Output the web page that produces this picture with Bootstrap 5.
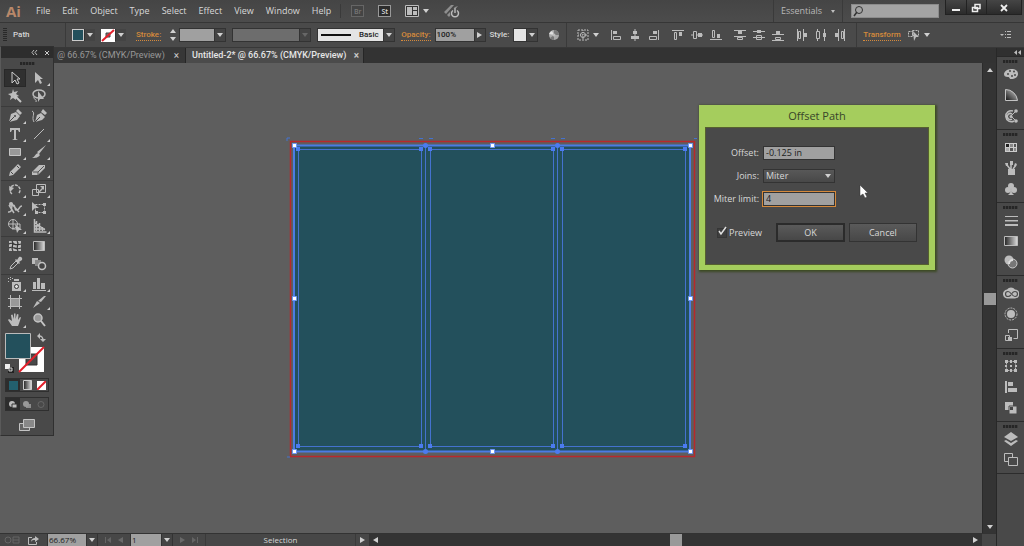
<!DOCTYPE html>
<html lang="en">
<head>
<meta charset="utf-8">
<meta name="viewport" content="width=device-width, initial-scale=1">
<title>Untitled-2 - Offset Path</title>
<link href="https://cdn.jsdelivr.net/npm/bootstrap@5.3.0/dist/css/bootstrap.min.css" rel="stylesheet">
<style>
:root{--bar:#4a4a4a;--dark:#323232;--line:#2e2e2e;--ink:#d8d8d8;--field:#a0a0a0;--accent:#d68a3c}
body{font-family:"Open Sans","Noto Sans",sans-serif;font-size:9px;line-height:12px;color:var(--ink);background:#5e5e5e}
svg{display:block;flex:none;fill:#bcbcbc;stroke:none}
svg .ln,.ln{fill:none;stroke:#bcbcbc}
.tiny{font-size:8px}
button,input,select{font:inherit;color:inherit;border:0;padding:0;margin:0;border-radius:0;min-width:0}
button{background:none}
.vr-dark{width:1px;align-self:stretch;background:#3a3a3a;flex:none}
.caret-d{border:3px solid transparent;border-top:4px solid #d0d0d0;border-bottom:0;width:0;height:0;flex:none}
.caret-s{border:2px solid transparent;border-top:3px solid #c0c0c0;border-bottom:0;width:0;height:0;flex:none}
.caret-u{border:3px solid transparent;border-bottom:4px solid #d0d0d0;border-top:0;width:0;height:0;flex:none}
.caret-r{border:3px solid transparent;border-left:5px solid #d0d0d0;border-right:0;width:0;height:0;flex:none}
.caret-l{border:3px solid transparent;border-right:5px solid #d0d0d0;border-left:0;width:0;height:0;flex:none}
.off{opacity:.25}
/* menu bar */
.menubar{height:23px;background:linear-gradient(#454545,#4c4c4c);border-bottom:1px solid #363636}
.logo{font-family:"Open Sans",sans-serif;font-size:15px;line-height:20px;font-weight:700;color:#b8886a;width:32px;padding-left:6px}
.menus{gap:12px}
.menus a,.optbar a{color:inherit;text-decoration:none}
.optbar a{color:var(--accent);border-bottom:1px dotted var(--accent);line-height:10px;white-space:nowrap}
.appbox{width:13px;height:12px;border:1px solid #999;background:#2c2c2c;font-size:7px;line-height:9px;text-align:center;font-weight:600}
.appbox.dim{border-color:#666;color:#777;background:#444}
.app-tools{gap:14px;margin-left:9px;padding-left:10px;border-left:1px solid #3a3a3a}
.work{width:68px;gap:9px;color:#b8b8b8}
.find{width:88px;height:14px;background:#a3a3a3;border:1px solid #8b8b8b}
.find input{background:none;color:#222;width:100%}
.winbtns{height:15px;margin:0 2px 0 6px;background:linear-gradient(#454545,#2b2b2b);border:1px solid #222;border-top:0}
.winbtns button{height:14px;border-left:1px solid #222}
.winbtns button:first-child{border:0}
.wb{width:20px}.wb-x{width:35px}
/* options bar */
.optbar{font-family:Roboto,"Open Sans",sans-serif;font-weight:500;height:25px;background:#4a4a4a;gap:6px;border-bottom:1px solid #383838;padding-left:3px}
.gripv{width:4px;height:14px;background:repeating-linear-gradient(#292929 0 1px,transparent 1px 2px)}
.kind{width:46px}
.step{width:12px;align-items:center}
.fld{height:14px;border:1px solid #333;background:var(--field);color:#1c1c1c;display:flex}
.fld input{background:none;width:100%;height:12px;padding:0 1px}
.dd{width:11px;height:12px;background:#444;border-left:1px solid #333;display:flex;align-items:center;justify-content:center;flex:none}
.swatch-s{width:12px;height:12px;border:1px solid #ccc;background:#23505c}
.wh{background:#e4e4e4}
.trio{gap:7px}
.aligns{gap:12px;padding:0 4px 0 5px}
/* tabs */
.tabstrip{height:15px;background:#333;padding-left:54px;font-family:Roboto,"Open Sans",sans-serif}
.tab{height:15px;border-right:1px solid #262626;color:#989898;background:#373737;line-height:15px;white-space:nowrap;padding:0 4px 0 3px}
.tab.current{background:#4b4b4b;color:#e6e6e6;font-weight:500;padding:0 2px 0 6px}
.tab button{width:9px;line-height:13px;color:#ccc;font-size:10px}
/* work area */
.board{background:#5e5e5e;min-width:0}
.vbar{width:14px;background:#343434;border-left:1px solid #2b2b2b;padding:5px 0 4px}
.thumb{width:12px;height:12px;background:#999;flex:none}
.status{height:13px;background:#474747;border-top:1px solid #333;overflow:hidden}
.status .fld{height:12px;border-width:0 1px}
.hbar{background:#343434;padding:0 4px}
/* dock */
.dock{width:28px;background:#494949;border-left:1px solid #282828}
.dock-head{height:9px;background:#303030;border-bottom:1px solid #292929;padding-right:3px}
.dockset{border-bottom:1px solid #2c2c2c;padding-bottom:5px;gap:5px}
.griph{height:9px;width:100%;display:flex;align-items:center;justify-content:center}
.griph::before{content:"";width:15px;height:3px;background:repeating-linear-gradient(90deg,#262626 0 2px,#3c3c3c 2px 3px)}
.dockset .griph{margin-bottom:-5px}
.dockset button,.toolset button{display:flex}
/* floating tool box */
.toolbox{left:0;top:46px;width:54px;background:#494949;border:1px solid #303030;border-left-color:#5a5a5a;z-index:5}
.tb-head{height:11px;background:#2d2d2d;gap:6px;padding-right:3px}
.toolbox .griph{height:11px}
.toolset{display:grid;grid-template-columns:22px 22px;justify-content:center;grid-auto-rows:18px;gap:0 2px}
.toolset+.toolset{border-top:1px solid #3b3b3b;margin-top:1px}
.toolset button{align-items:center;justify-content:center;position:relative}
.toolset .on{background:#303030;outline:1px solid #282828;outline-offset:-1px}
.more::after{content:"";position:absolute;right:0;bottom:1px;border-bottom:3px solid #ccc;border-left:3px solid transparent}
.modes{margin:5px 4px 0 4px;border:1px solid #2f2f2f;height:14px;width:44px}
.modes button{width:14px;height:12px;display:flex;align-items:center;justify-content:center}
.modes .on{background:#2d2d2d}
/* dialog */
.dlg{top:42px;right:47px;width:236px;background:#a5cd5d;padding:0 6px 5px;box-shadow:1px 1px 2px 1px #3c4a24;z-index:3}
.dlg h1{font-size:11px;line-height:22px;margin:0;text-align:center;font-weight:400;color:#39452a}
.dlg-body{background:#494949;border:1px solid #56602f;padding:18px 11px 21px;height:138px}
.rows{display:grid;grid-template-columns:42px 72px;grid-auto-rows:13px;gap:10px 4px;align-items:center}
.rows label{text-align:right;white-space:nowrap;justify-self:end}
.rows .fld{height:14px}
.rows .fld input,.rows select{height:12px;padding:0 2px;line-height:12px}
.rows .pick{background:linear-gradient(#585858,#484848);color:var(--ink);align-items:center;padding-right:3px}
.rows select{appearance:none;background:none;width:100%}
.rows .hot{outline:1px solid var(--accent)}
.rows input:focus{outline:0}
.acts{margin-top:18px;gap:4px}
.acts .chk{width:56px;gap:2px}
.chk input{appearance:none;width:10px;height:10px;background:#3e3e3e;border:1px solid #363636;margin:0}
.chk svg{position:absolute;left:0;top:-2px;pointer-events:none}
.acts button{width:69px;height:19px;background:linear-gradient(#5a5a5a,#474747);border:1px solid #333;line-height:17px}
.acts .def{border:2px solid #2b2b2b;line-height:15px}
.pointer{top:122px;right:113px;z-index:4}
</style>
</head>
<body class="vh-100 d-flex flex-column overflow-hidden">

<header class="menubar d-flex align-items-center flex-shrink-0">
  <div class="logo pe-1">Ai</div>
  <nav class="menus d-flex ps-1" aria-label="Main menu">
    <a href="#">File</a><a href="#">Edit</a><a href="#">Object</a><a href="#">Type</a><a href="#">Select</a><a href="#">Effect</a><a href="#">View</a><a href="#">Window</a><a href="#">Help</a>
  </nav>
  <div class="app-tools d-flex align-items-center">
    <button class="appbox dim" type="button">Br</button>
    <button class="appbox" type="button">St</button>
    <button type="button" class="d-flex align-items-center" aria-label="Arrange documents"><svg class="me-1" width="14" height="12"><path d="M0 0h14v12H0z" fill="#333"/><path d="M.5.5h13v11H.5z" class="ln"/><path d="M2 2h5v8H2zM8 2h4v3H8zM8 6h4v4H8z"/></svg><span class="caret-d"></span></button>
    <button type="button" aria-label="GPU performance"><svg width="18" height="14"><path d="M1 8 8 1h3L3 10zM4 11l8-8 3-1-9 11z" opacity=".6"/><circle cx="12" cy="9" r="5" fill="#4a4a4a"/><path class="ln" d="M10 6.500a3.500 3.500 0 1 0 4 0" stroke-width="1.500"/><path d="M11.300 4h1.400v5h-1.400z"/></svg></button>
  </div>
  <div class="ms-auto d-flex align-self-stretch align-items-center">
    <span class="vr-dark"></span>
    <button type="button" class="work d-flex align-items-center justify-content-center">Essentials <span class="caret-s"></span></button>
    <span class="vr-dark me-2"></span>
    <label class="find d-flex align-items-center"><svg width="14" height="12"><circle cx="7" cy="5" r="3.500" fill="none" stroke="#333"/><path d="m5 7-3 4" stroke="#333" stroke-width="1.500"/></svg><input type="text" aria-label="Search"></label>
    <div class="winbtns d-flex align-self-start">
      <button class="wb" type="button" aria-label="Minimize"><svg width="20" height="13"><path d="M6 8h8v2H6z" fill="#eee"/></svg></button>
      <button class="wb" type="button" aria-label="Restore"><svg width="19" height="13"><path d="M8 3.500h5v4H8zM5.500 6.500h5v4h-5z" fill="#333" stroke="#eee" stroke-width="1.500"/></svg></button>
      <button class="wb-x" type="button" aria-label="Close"><svg width="34" height="13"><path d="m14 4 6 6m0-6-6 6" stroke="#eee" stroke-width="1.800"/></svg></button>
    </div>
  </div>
</header>

<section class="optbar d-flex align-items-center flex-shrink-0 tiny" aria-label="Control panel">
  <span class="gripv"></span>
  <span class="kind">Path</span>
  <span class="vr-dark"></span>
  <button type="button" class="d-flex" aria-label="Fill"><span class="swatch-s"></span><span class="dd"><i class="caret-d"></i></span></button>
  <button type="button" class="d-flex me-1" aria-label="Stroke colour"><svg width="14" height="13"><path d="M0 0h14v13H0z" fill="#fff"/><path d="M5 4h4v4H5z" fill="#777" stroke="#444"/><path d="M1 12 13 1" stroke="#e3202b" stroke-width="2"/></svg><span class="dd"><i class="caret-d"></i></span></button>
  <a href="#">Stroke:</a>
  <div class="d-flex align-items-center">
    <button type="button" class="step d-flex flex-column gap-1" aria-label="Step stroke weight"><i class="caret-u"></i><i class="caret-d"></i></button>
    <div class="fld" style="width:47px"><input type="text" aria-label="Stroke weight"><span class="dd"><i class="caret-d"></i></span></div>
  </div>
  <div class="fld" style="width:79px;background:#6d6d6d"><input type="text" disabled aria-label="Width profile"><span class="dd"><i class="caret-d off"></i></span></div>
  <button type="button" class="fld wh align-items-center" style="width:78px"><svg width="36" height="2"><path d="M3 0h30v2H3z" fill="#111"/></svg><span class="flex-fill">Basic</span><span class="dd"><i class="caret-d"></i></span></button>
  <div class="d-flex align-items-center gap-1">
    <a href="#">Opacity:</a>
    <div class="fld" style="width:51px"><input type="text" value="100%" aria-label="Opacity"><span class="dd"><i class="caret-r"></i></span></div>
    <span>Style:</span>
    <button type="button" class="fld wh" style="width:25px" aria-label="Graphic style"><span class="flex-fill"></span><span class="dd"><i class="caret-d"></i></span></button>
  </div>
  <button type="button" class="ms-1" aria-label="Recolor artwork"><svg width="12" height="12"><circle cx="6" cy="6" r="5" fill="#aaa"/><path d="M6 6V1a5 5 0 0 1 5 5zM6 6l-4 3a5 5 0 0 0 4 2z" fill="#777"/><path d="M6 6 1 5a5 5 0 0 1 3-3z" fill="#e0e0e0"/><circle cx="6" cy="6" r="1.500"/></svg></button>
  <span class="vr-dark"></span>
  <button type="button" class="d-flex align-items-center gap-1 ms-1" aria-label="Align to"><svg width="12" height="12"><path class="ln" d="M1 1h10v10H1z" stroke-dasharray="2 1"/><circle class="ln" cx="6" cy="6" r="2.500"/><path class="ln" d="M6 1v10M1 6h10" stroke-dasharray="1 1"/></svg><i class="caret-d"></i></button>
  <div class="aligns d-flex">
    <div class="trio d-flex">
      <svg width="12" height="12"><path d="M1 1h1v10H1zM3 2h4v3H3z"/><path class="ln" d="M3.500 7.500h7v3h-7z"/></svg>
      <svg width="12" height="12"><path d="M5.500 0h1v12h-1zM4 2h4v3H4z"/><path d="M2 7h8v3H2z"/></svg>
      <svg width="12" height="12"><path d="M10 1h1v10h-1zM5 2h4v3H5z"/><path class="ln" d="M1.500 7.500h7v3h-7z"/></svg>
    </div>
    <div class="trio d-flex">
      <svg width="12" height="12"><path d="M0 1h12v1H0zM7 3h3v4H7z"/><path class="ln" d="M2.500 3.500h2v7h-2z"/></svg>
      <svg width="12" height="12"><path d="M0 5.500h12v1H0zM7 4h4v4H7z"/><path class="ln" style="fill:#4a4a4a" d="M2.500 2.500h3v7h-3z"/></svg>
      <svg width="12" height="12"><path d="M0 10h12v1H0zM7 5h3v4H7z"/><path class="ln" d="M2.500 1.500h2v7h-2z"/></svg>
    </div>
    <div class="trio d-flex">
      <svg width="12" height="12"><path d="M0 1h12v1H0zM4 2h4v3H4zM0 7h12v1H0z"/><path class="ln" d="M3.500 8.500h5v2h-5z"/></svg>
      <svg width="12" height="12"><path d="M0 2h12v1H0zM4 1h4v3H4zM0 8h12v1H0z"/><path class="ln" d="M3.500 6.500h5v4h-5z"/></svg>
      <svg width="12" height="12"><path d="M0 5h12v1H0zM4 2h4v3H4zM0 11h12v1H0z"/><path class="ln" d="M3.500 8.500h5v2h-5z"/></svg>
    </div>
    <div class="trio d-flex">
      <svg width="12" height="12"><path d="M1 0h1v12H1zM7 0h1v12H7zM8 4h3v4H8z"/><path class="ln" d="M2.500 2.500h2v7h-2z"/></svg>
      <svg width="12" height="12"><path d="M2 0h1v12H2zM9 0h1v12H9zM8 4h3v4H8z"/><path class="ln" style="fill:#4a4a4a" d="M1.500 2.500h3v7h-3z"/></svg>
      <svg width="12" height="12"><path d="M4 0h1v12H4zM10 0h1v12h-1zM1 4h3v4H1z"/><path class="ln" d="M7.500 2.500h2v7h-2z"/></svg>
    </div>
  </div>
  <span class="vr-dark"></span>
  <a href="#">Transform</a>
  <button type="button" class="d-flex align-items-center gap-1" aria-label="Isolate"><svg width="13" height="12"><path class="ln" d="M1.500 2.500h4v5h-4zM5.500 1.500h6v5h-6z" stroke-dasharray="2 1"/><path d="m6 2 6 6-3 0-2 4z"/></svg><i class="caret-d"></i></button>
  <button type="button" class="ms-auto me-2 pe-1" aria-label="Panel menu"><svg width="12" height="10"><path d="M0 4h4L2 6zM5 1h1v1H5zM7 1h4v1H7zM5 4h1v1H5zM7 4h4v1H7zM5 7h1v1H5zM7 7h4v1H7z"/></svg></button>
</section>

<div class="d-flex flex-fill overflow-hidden">
  <main class="d-flex flex-column flex-fill overflow-hidden">
    <div class="tabstrip d-flex flex-shrink-0" role="tablist">
      <div class="tab d-flex justify-content-between" style="width:132px"><span>@ 66.67% (CMYK/Preview)</span><button type="button" aria-label="Close tab">×</button></div>
      <div class="tab current d-flex justify-content-between" style="width:178px"><span>Untitled-2* @ 66.67% (CMYK/Preview)</span><button type="button" aria-label="Close tab">×</button></div>
    </div>
    <div class="d-flex flex-fill overflow-hidden">
      <div class="board flex-fill d-flex align-items-center justify-content-center position-relative">
        <svg width="412" height="324" role="img" aria-label="Artwork with three panels">
          <path d="M9 9h396v306H9z" fill="#23505c"/>
          <path d="M5.500 5.500h404v315h-404z" fill="none" stroke="#b8282c" stroke-width="1.500"/>
          <path d="M9 9.500h396v306H9z" fill="none" stroke="#4b7be4" stroke-width="2"/>
          <path d="M140.500 9v306M272.500 9v306M13.500 13.500h123v297h-123zM145.500 13.500h123v297h-123zM277.500 13.500h123v297h-123z" fill="none" stroke="#4472cf"/>
          <path d="M2 2h3M2 2v3M134 2.500h4M144 2.500h4M266 2.500h4M276 2.500h4M409 2.500h3M2 321h3" fill="none" stroke="#4472cf"/>
          <g fill="#4b7bf0">
            <path d="M11 11h4v4h-4zM134 11h4v4h-4zM143 11h4v4h-4zM266 11h4v4h-4zM275 11h4v4h-4zM398 11h4v4h-4zM11 308h4v4h-4zM134 308h4v4h-4zM143 308h4v4h-4zM266 308h4v4h-4zM275 308h4v4h-4zM398 308h4v4h-4z"/>
            <circle cx="140.500" cy="9.500" r="2.500"/><circle cx="272.500" cy="9.500" r="2.500"/><circle cx="140.500" cy="315.500" r="2.500"/><circle cx="272.500" cy="315.500" r="2.500"/>
          </g>
          <path d="M7.500 7.500h4v4h-4zM205.500 7.500h4v4h-4zM403.500 7.500h4v4h-4zM7.500 160.500h4v4h-4zM403.500 160.500h4v4h-4zM7.500 313.500h4v4h-4zM205.500 313.500h4v4h-4zM403.500 313.500h4v4h-4z" fill="#fff" stroke="#6f97f4"/>
        </svg>

        <section class="dlg position-absolute" role="dialog" aria-labelledby="dlgTitle">
          <h1 id="dlgTitle">Offset Path</h1>
          <form class="dlg-body">
            <div class="rows">
              <label for="off">Offset:</label><div class="fld"><input id="off" type="text" value="-0.125 in"></div>
              <label for="join">Joins:</label><div class="fld pick"><select id="join"><option>Miter</option><option>Round</option><option>Bevel</option></select><i class="caret-d"></i></div>
              <label for="lim">Miter limit:</label><div class="fld hot"><input id="lim" type="text" value="4"></div>
            </div>
            <div class="acts d-flex align-items-center">
              <label class="chk d-flex align-items-center position-relative"><input type="checkbox" checked><svg width="12" height="12"><path d="m2 6 2 3 5-7" fill="none" stroke="#e0e0e0" stroke-width="1.500"/></svg>Preview</label>
              <button type="button" class="def">OK</button>
              <button type="button">Cancel</button>
            </div>
          </form>
        </section>
        <svg class="pointer position-absolute" width="10" height="14"><path d="M1 0v11l3-2 2 4 2-1-2-4h3z" fill="#fff" stroke="#333" stroke-width=".5"/></svg>
      </div>
      <div class="vbar d-flex flex-column align-items-center justify-content-between flex-shrink-0">
        <i class="caret-u"></i><span class="thumb"></span><i class="caret-d"></i>
      </div>
    </div>
    <footer class="status d-flex align-items-center flex-shrink-0 tiny">
      <svg class="off ms-1 me-2" width="16" height="10"><circle class="ln" cx="4" cy="5" r="3"/><path class="ln" d="M9 2h6v6H9zM9 5h6"/></svg>
      <svg class="me-2" width="11" height="10"><path class="ln" d="M4 2.500H.500v7h8V7"/><path d="M3 7c0-3 2-4 4-4V1l4 3-4 3V5C5 5 4 5 3 7z"/></svg>
      <div class="fld" style="width:51px"><input type="text" value="66.67%" aria-label="Zoom"><span class="dd"><i class="caret-d"></i></span></div>
      <span class="off d-flex align-items-center justify-content-around px-1" style="width:32px"><svg width="7" height="6"><path d="M0 0h1v6H0zM6 0v6L2 3z"/></svg><i class="caret-l"></i></span>
      <div class="fld" style="width:43px"><input type="text" value="1" aria-label="Artboard"><span class="dd"><i class="caret-d"></i></span></div>
      <span class="off d-flex align-items-center justify-content-around px-1" style="width:32px"><i class="caret-r"></i><svg width="7" height="6"><path d="M6 0h1v6H6zM1 0v6l4-3z"/></svg></span>
      <span class="vr-dark"></span>
      <span class="text-center" style="width:149px">Selection</span>
      <span class="vr-dark me-1"></span><i class="caret-r me-1"></i>
      <div class="hbar flex-fill align-self-stretch d-flex align-items-center justify-content-between"><i class="caret-l"></i><span class="thumb"></span><i class="caret-r"></i></div>
      <span style="width:14px"></span>
    </footer>
  </main>

  <aside class="dock flex-shrink-0">
    <div class="dock-head d-flex align-items-center justify-content-end"><svg width="7" height="5"><path d="M3 0v5L0 2.500zM7 0v5L4 2.500z"/></svg></div>
    <div class="dockset d-flex flex-column align-items-center"><span class="griph"></span>
      <button type="button" aria-label="Color"><svg width="16" height="16"><path d="M8 3c5 0 7 2 7 5s-3 5-7 5c-2 0-1-2-3-2-3 0-4-1-4-3s3-5 7-5z"/><g fill="#494949"><circle cx="5" cy="8" r="1"/><circle cx="7" cy="5" r="1"/><circle cx="11" cy="5.500" r="1"/><circle cx="12" cy="9" r="1"/><circle cx="9" cy="10" r="1"/></g></svg></button>
      <button type="button" aria-label="Color guide"><svg width="16" height="16"><defs><linearGradient id="fan" x1="0" y1="1" x2="1" y2="0"><stop offset="0" stop-color="#111"/><stop offset=".8" stop-color="#aaa"/></linearGradient></defs><path d="M2.500 2.500v11h12a12 12 0 0 0-12-11z" fill="url(#fan)" stroke="#c4c4c4"/></svg></button>
      <button type="button" aria-label="Color themes"><svg width="16" height="16"><path class="ln" stroke-width="1.500" d="M11 13a5.500 5.500 0 1 1-1-10M9 11a3 3 0 1 1 0-5"/><path class="ln" d="m8 8 5-5M8 8l5 5"/><circle cx="13" cy="3" r="1.800"/><circle cx="13" cy="13" r="1.800"/><circle cx="8" cy="8.500" r="1.500"/></svg></button></div>
    <div class="dockset d-flex flex-column align-items-center"><span class="griph"></span>
      <button type="button" aria-label="Swatches"><svg width="16" height="16"><path d="M2 4h12v9H2z" fill="#ccc"/><path d="M3 5h3v3H3z" fill="#222"/><path d="M7 5h3v3H7zM11 9h2v3h-2z" fill="#888"/><path d="M11 5h2v3h-2zM7 9h3v3H7z" fill="#555"/><path d="M3 9h3v3H3z" fill="#aaa"/></svg></button>
      <button type="button" aria-label="Brushes"><svg width="16" height="16"><path d="M5 9h7v6H5z"/><path class="ln" stroke-width="1.500" d="M7 9 4 5M8 9V3M10 9l3-4"/><path d="M2 3h3v3H3zM7 1h3v4H7zM12 3l2 1-1 2-2 0z"/></svg></button>
      <button type="button" aria-label="Symbols"><svg width="16" height="16"><circle cx="8" cy="5" r="3"/><circle cx="5" cy="9" r="3"/><circle cx="11" cy="9" r="3"/><path d="m8 7 1 5 2 2H5l2-2z"/></svg></button></div>
    <div class="dockset d-flex flex-column align-items-center"><span class="griph"></span>
      <button type="button" aria-label="Stroke"><svg width="16" height="16"><path d="M2 4h13v1H2zM2 8h13v1.500H2zM2 12h13v2H2z"/></svg></button>
      <button type="button" aria-label="Gradient"><svg width="16" height="16"><defs><linearGradient id="gr"><stop offset="0" stop-color="#222"/><stop offset="1" stop-color="#ddd"/></linearGradient></defs><path d="M1.500 3.500h13v9h-13z" fill="url(#gr)" stroke="#bbb"/></svg></button>
      <button type="button" aria-label="Transparency"><svg width="16" height="16"><circle cx="6" cy="6" r="4.500"/><circle cx="9.500" cy="9.500" r="4.500" fill="#777" stroke="#ccc"/><path d="M6 10a4 4 0 0 1 4-4" stroke="#ddd" stroke-width="2" fill="none"/></svg></button></div>
    <div class="dockset d-flex flex-column align-items-center"><span class="griph"></span>
      <button type="button" aria-label="Libraries"><svg width="16" height="16"><path d="M5 13.500a4.500 4.500 0 0 1-1-9 5 5 0 0 1 8 0 4.500 4.500 0 0 1 0 9z"/><path fill="none" stroke="#494949" stroke-width="1.200" d="M8 10c-1 1-2 1.500-3 1.500a2.500 2.500 0 0 1 0-5c3 0 4 5 7 5a2.500 2.500 0 0 0 0-5c-1 0-2 0-3 2"/></svg></button>
      <button type="button" aria-label="Appearance"><svg width="16" height="16"><circle cx="8" cy="8" r="4"/><circle class="ln" cx="8" cy="8" r="6" stroke-dasharray="2 1"/></svg></button>
      <button type="button" aria-label="Asset export"><svg width="16" height="16"><path class="ln" d="M5.500 6V2.500h9v9h-4"/><path class="ln" d="M2.500 8.500h4v5h-4z"/><path d="M5 10h4v4H5z"/></svg></button></div>
    <div class="dockset d-flex flex-column align-items-center"><span class="griph"></span>
      <button type="button" aria-label="Transform"><svg width="16" height="16"><path class="ln" d="M3.500 3.500h9v9h-9z" stroke-dasharray="2 1"/><path d="M2 2h3v3H2zM11 2h3v3h-3zM2 11h3v3H2zM11 11h3v3h-3zM7 2h2v3H7zM7 11h2v3H7zM2 7h2v2H2zM12 7h2v2h-2zM7 7h2v2H7z"/></svg></button>
      <button type="button" aria-label="Align"><svg width="16" height="16"><path d="M2 2h2v12H2zM5 3h5v4H5zM5 9h9v4H5z"/></svg></button>
      <button type="button" aria-label="Pathfinder"><svg width="16" height="16"><path d="M2 2h8v8H2z"/><path d="M6 6h8v8H6z" stroke="#494949"/><path d="M7 7h3v3H7z" fill="#444"/></svg></button></div>
    <div class="dockset d-flex flex-column align-items-center"><span class="griph"></span>
      <button type="button" aria-label="Layers"><svg width="16" height="16"><path d="m8 1 7 5-7 4-7-4z"/><path d="m1 10 2-1 5 3 5-3 2 1-7 5z"/></svg></button>
      <button type="button" aria-label="Artboards"><svg width="16" height="16"><path class="ln" d="M5 9.500H1.500v-8h8V5M5.500 5.500h9v8h-9z"/></svg></button></div>
  </aside>
</div>

<aside class="toolbox position-absolute" aria-label="Tools">
  <div class="tb-head d-flex align-items-center justify-content-end"><svg width="7" height="5"><path d="M3 0 1 2.500 3 5M6 0 4 2.500 6 5" class="ln"/></svg><svg width="6" height="6"><path d="m1 1 4 4m0-4L1 5" stroke="#ccc"/></svg></div>
  <span class="griph"></span>
  <div class="toolset">
    <button type="button" class="on" aria-label="Selection"><svg width="16" height="16"><path d="M5 2v11l3-3 2 4 2-1-2-4h3z" fill="#333" stroke="#ccc"/></svg></button>
    <button type="button" class="more" aria-label="Direct selection"><svg width="16" height="16"><path d="M4 2v11l3-3 2 4 2-1-2-4h3z"/></svg></button>
    <button type="button" aria-label="Magic wand"><svg width="16" height="16"><path d="m6 1 1 3 4-1-2 3 3 2-3 1v3L6 10l-3 2 1-4-3-2 4-1z"/><path d="m8 8 6 6" stroke="#c4c4c4" stroke-width="2"/></svg></button>
    <button type="button" aria-label="Lasso"><svg width="16" height="16"><ellipse class="ln" cx="8" cy="6" rx="6" ry="4" stroke-width="1.500"/><path class="ln" d="M3 9c-1 3 3 1 2 5"/><path d="M7 3v11l2-3h4z"/></svg></button>
  </div>
  <div class="toolset">
    <button type="button" class="more" aria-label="Pen"><svg width="16" height="16"><path d="m2 14 2-8 5-2 4 4-3 4z"/><path d="m9 3 2-2 4 4-2 2z"/><path d="m2 14 5-5" stroke="#444"/><circle cx="8" cy="8" r="1" fill="#444"/></svg></button>
    <button type="button" aria-label="Curvature"><svg width="16" height="16"><path d="m4 14 2-7 4-2 4 4-3 3zM10 4l2-3 4 4-2 2z"/><path class="ln" d="M1 3c4 2-1 6 2 11"/><path d="m4 14 5-5" stroke="#444"/></svg></button>
    <button type="button" class="more" aria-label="Type"><svg width="16" height="16"><path d="M3 2h10v4h-1l-1-2H9v9l2 1H5l2-1V4H5L4 6H3z"/></svg></button>
    <button type="button" class="more" aria-label="Line"><svg width="16" height="16"><path class="ln" d="M3 13 13 3"/></svg></button>
    <button type="button" class="more" aria-label="Rectangle"><svg width="16" height="16"><path d="M2.500 4.500h11v7h-11z" fill="#999" stroke="#c4c4c4"/></svg></button>
    <button type="button" class="more" aria-label="Paintbrush"><svg width="16" height="16"><path d="m15 1-7 9-2-2zM7 9l2 2c-2 3-5 3-8 3 3-1 3-4 6-5z"/></svg></button>
    <button type="button" class="more" aria-label="Pencil"><svg width="16" height="16"><path d="m2 14 1-4 8-8 3 3-8 8z"/><path d="m4 10 2 2M10 4l2 2" stroke="#444"/></svg></button>
    <button type="button" class="more" aria-label="Eraser"><svg width="16" height="16"><path d="m1 10 7-7h6v3l-7 7H1z"/><path d="m2 10h5l6-6M7 10v3" fill="none" stroke="#555"/></svg></button>
  </div>
  <div class="toolset">
    <button type="button" class="more" aria-label="Rotate"><svg width="16" height="16"><path class="ln" stroke-width="1.500" stroke-dasharray="3 1" d="M5 12a5 5 0 1 1 7-1"/><path d="m2 4 1 6 4-4z"/></svg></button>
    <button type="button" class="more" aria-label="Scale"><svg width="16" height="16"><path class="ln" d="M5.500 2.500h9v8h-9zM1.500 7.500h6v6h-6z"/><path d="M13 4v4l-1-1-4 4-1-1 4-4-2-2z"/></svg></button>
    <button type="button" class="more" aria-label="Width"><svg width="16" height="16"><path class="ln" stroke-width="1.500" d="M1 12c6 1 2-7 5-7s1 6 4 5 2-4 5-4M2 5l5 8M4 3l8 9"/><circle cx="4" cy="4" r="2"/></svg></button>
    <button type="button" aria-label="Free transform"><svg width="16" height="16"><path class="ln" d="M4.500 4.500h9v8h-9z" stroke-dasharray="2 1"/><path d="M12 3h3v3h-3zM12 11h3v3h-3zM4 11h3v3H4zM1 2v9l3-3h4z"/></svg></button>
    <button type="button" class="more" aria-label="Shape builder"><svg width="16" height="16"><circle class="ln" cx="6" cy="6" r="4.500"/><path class="ln" d="M2 6h11v5H5M6 2v9"/><path d="m8 6 7 6-3 0-2 3z"/></svg></button>
    <button type="button" class="more" aria-label="Perspective grid"><svg width="16" height="16"><path class="ln" d="M3.500 1v13h12M5.500 3v10M8.500 5v8M11.500 9v4M3 4l11 8M3 8h6M3 11h11" stroke-width="1.500"/></svg></button>
  </div>
  <div class="toolset">
    <button type="button" aria-label="Mesh"><svg width="16" height="16"><path d="M2 3h12v10H2z"/><path d="M2 6c4-3 5 3 12 0M2 10c4-3 6 3 12 0M5 3c3 3-2 6 1 10M10 3c3 3-2 6 1 10" fill="none" stroke="#333" stroke-width="1.200"/></svg></button>
    <button type="button" aria-label="Gradient tool"><svg width="16" height="16"><path d="M2.500 3.500h11v9h-11z" fill="url(#gr)" stroke="#bbb"/></svg></button>
    <button type="button" class="more" aria-label="Eyedropper"><svg width="16" height="16"><path class="ln" d="m3 13 1-3 5-5 2 2-5 5z"/><path d="m8 4 1-1 1 1 2-3c2-1 4 1 3 3l-3 2 1 1-1 1z"/></svg></button>
    <button type="button" aria-label="Blend"><svg width="16" height="16"><path d="M1 2h6v6H1z"/><path d="M4 4h6v6H4z" fill="#888"/><circle cx="11" cy="10" r="3.500" fill="#444" stroke="#c4c4c4" stroke-width="1.500"/></svg></button>
  </div>
  <div class="toolset">
    <button type="button" class="more" aria-label="Symbol sprayer"><svg width="16" height="16"><path d="M5 6h9v9H5zM7 3h5v2H7z"/><path d="M1 2h1v1H1zM3 1h1v1H3zM3 3h1v1H3zM5 2h1v1H5zM1 5h1v1H1z"/><circle cx="9.500" cy="10.500" r="2" fill="#ddd" stroke="#333"/></svg></button>
    <button type="button" class="more" aria-label="Column graph"><svg width="16" height="16"><path d="M2 6h3v7H2zM6 2h3v11H6zM10 7h4v6h-4zM1 14h14v1H1z"/></svg></button>
    <button type="button" aria-label="Artboard tool"><svg width="16" height="16"><path d="M4 5h8v7H4z" fill="#999"/><path class="ln" d="M3.500 1v14M12.500 1v14M1 4.500h14M1 12.500h14"/></svg></button>
    <button type="button" class="more" aria-label="Slice"><svg width="16" height="16"><path d="m2 14 4-7 3 2zM7 7l6-5 2 0-5 6z"/></svg></button>
    <button type="button" class="more" aria-label="Hand"><svg width="16" height="16"><path d="m5 14-4-6 1-1 3 2-1-6 1.500-.5L7 7V1.500h1.500V7l1.500-5 1.500.5L11 8l2-3 1 .5-2 6-1 2.500z"/></svg></button>
    <button type="button" aria-label="Zoom"><svg width="16" height="16"><circle cx="7" cy="6" r="4" fill="#999" stroke="#c4c4c4" stroke-width="1.500"/><path d="m10 9 4 5" stroke="#c4c4c4" stroke-width="2"/></svg></button>
  </div>
  <svg class="mt-1" width="48" height="40" role="img" aria-label="Fill and stroke">
    <path d="M18 14h25v25H18z" fill="#fff"/><path d="M25 21h11v11H25z" fill="#494949" stroke="#333"/><path d="m18 39 25-25" stroke="#e3202b" stroke-width="2"/>
    <path d="M4.500.500h25v25h-25z" fill="#23505c" stroke="#bbb"/>
    <path class="ln" stroke-width="1.500" d="M38 3c3 0 4 1 4 5"/><path d="m36 3 3-3v6zM39 6h6l-3 3z"/>
    <path d="M7 34h6v6H7z" fill="#222"/><path d="M4 31h5v5H4z" fill="#eee"/><path d="M8 35h3v3H8z" stroke="#ccc" fill="#444"/>
  </svg>
  <div class="modes d-flex"><button type="button" class="on" aria-label="Color"><svg width="9" height="9"><path d="M0 0h9v9H0z" fill="#23606e"/></svg></button><button type="button" aria-label="Gradient"><svg width="9" height="10"><path d="M.500.500h8v9h-8z" fill="url(#gr)" stroke="#ccc"/></svg></button><button type="button" aria-label="None"><svg width="9" height="9"><path d="M0 0h9v9H0z" fill="#fff"/><path d="m0 9 9-9" stroke="#e3202b" stroke-width="2"/></svg></button></div>
  <div class="modes d-flex"><button type="button" class="on" aria-label="Draw normal"><svg width="10" height="9"><circle cx="4" cy="4" r="3"/><path d="M4 4h5v4H4z" stroke="#333"/></svg></button><button type="button" aria-label="Draw behind"><svg width="10" height="9"><path d="M4 4h5v4H4z" opacity=".6"/><circle cx="4" cy="4" r="3" fill="#999"/></svg></button><button type="button" class="off" aria-label="Draw inside"><svg width="10" height="9"><circle cx="5" cy="4.500" r="3" class="ln"/></svg></button></div>
  <button type="button" class="d-flex mx-auto mt-2 mb-1" aria-label="Screen mode"><svg width="18" height="12"><path d="M1.500 4.500h10v7h-10z" fill="#666" stroke="#c4c4c4"/><path d="M5.500.500h11v8h-11z" fill="#888" stroke="#c4c4c4"/></svg></button>
</aside>

<script src="https://cdn.jsdelivr.net/npm/bootstrap@5.3.0/dist/js/bootstrap.bundle.min.js"></script>
</body>
</html>
